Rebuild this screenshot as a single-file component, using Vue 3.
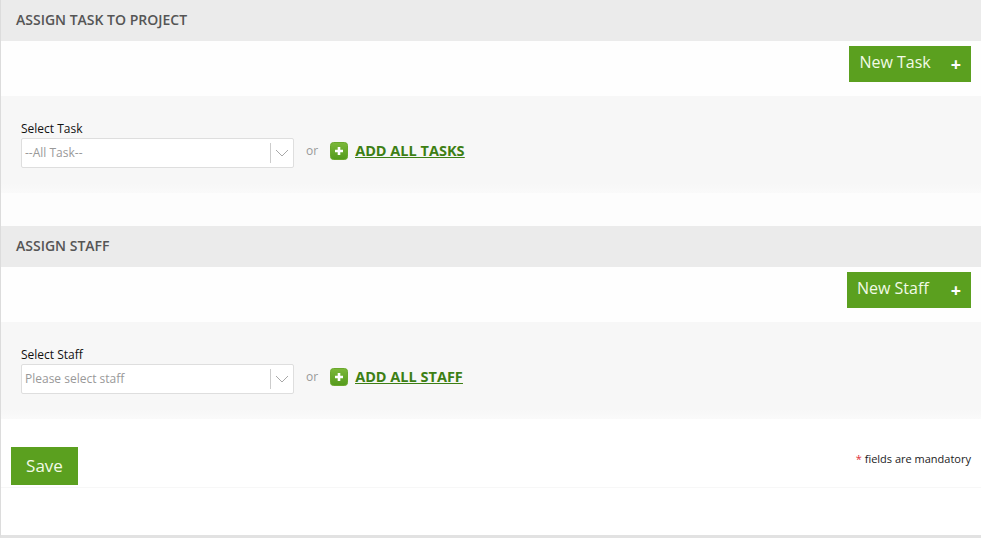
<script setup>
const sections = [
    {
        title: "ASSIGN TASK TO PROJECT",
        button: "New Task",
        label: "Select Task",
        placeholder: "--All Task--",
        addAll: "ADD ALL TASKS",
    },
    {
        title: "ASSIGN STAFF",
        button: "New Staff",
        label: "Select Staff",
        placeholder: "Please select staff",
        addAll: "ADD ALL STAFF",
    },
];
</script>
<template>
    <div class="page">
        <section v-for="item in sections" :key="item.title" class="section">
            <h2 class="heading">{{ item.title }}</h2>
            <div class="actions">
                <button class="new-btn">
                    <span>{{ item.button }}</span>
                    <span class="plus">+</span>
                </button>
            </div>
            <div class="panel">
                <div class="field">
                    <label class="label">{{ item.label }}</label>
                    <div class="select">
                        <span class="placeholder">{{ item.placeholder }}</span>
                        <span class="arrow">
                            <svg width="14" height="8" viewBox="0 0 14 8">
                                <path d="M1 1l6 6 6-6" fill="none" stroke="#a8a8a8" stroke-width="1" />
                            </svg>
                        </span>
                    </div>
                </div>
                <span class="or">or</span>
                <a class="add-all" href="#">
                    <svg class="add-icon" width="18" height="18" viewBox="0 0 18 18">
                        <defs>
                            <linearGradient id="addGreen" x1="0" y1="0" x2="0" y2="1">
                                <stop offset="0" stop-color="#7cb83a" />
                                <stop offset="1" stop-color="#549a1c" />
                            </linearGradient>
                        </defs>
                        <rect x="0.5" y="0.5" width="17" height="17" rx="3" fill="url(#addGreen)" stroke="#6aa82c" />
                        <path d="M9 5v8M5 9h8" stroke="#fff" stroke-width="2.6" />
                    </svg>
                    <span class="add-text">{{ item.addAll }}</span>
                </a>
            </div>
        </section>
        <div class="footer">
            <button class="save">Save</button>
            <p class="note"><span class="star">*</span> fields are mandatory</p>
        </div>
    </div>
</template>
<style scoped>
.page {
    height: 535px;
    border-left: 1px solid #dcdcdc;
    border-bottom: 3px solid #e2e2e2;
    background: #fff;
    font-family: "Open Sans", sans-serif;
    overflow: hidden;
}

.section {
    background: #fdfdfd;
    padding-bottom: 33px;
}

.section:nth-child(2) {
    padding-bottom: 0;
}

.heading {
    margin: 0;
    height: 41px;
    padding-left: 15px;
    background: #ebebeb;
    color: #555;
    font-size: 14px;
    font-weight: 600;
    line-height: 39px;
}

.actions {
    display: flex;
    justify-content: flex-end;
    height: 55px;
    padding: 5px 10px 0 0;
    box-sizing: border-box;
    background: #fefefe;
}

.new-btn {
    display: flex;
    align-items: center;
    justify-content: space-between;
    height: 36px;
    padding: 0 10px;
    gap: 20px;
    border: none;
    background: #5ba01f;
    color: #f2fae6;
    font-family: inherit;
    font-size: 16px;
}

.section:nth-child(2) .new-btn {
    gap: 22px;
}

.new-btn span:first-child {
    margin-top: -4px;
}

.plus {
    margin-top: -1px;
    color: #fff;
    font-size: 18px;
    font-weight: 700;
    line-height: 1;
}

.panel {
    display: flex;
    align-items: flex-start;
    height: 97px;
    padding: 24px 0 0 20px;
    box-sizing: border-box;
    background: linear-gradient(#f7f7f7 90%, #fafafa);
}

.field {
    display: flex;
    flex-direction: column;
    width: 273px;
}

.label {
    color: #111;
    font-size: 12px;
    line-height: 18px;
}

.select {
    display: flex;
    align-items: center;
    justify-content: space-between;
    height: 30px;
    box-sizing: border-box;
    border: 1px solid #dedede;
    border-radius: 2px;
    background: #fff;
}

.placeholder {
    padding: 0 0 2px 3px;
    color: #999;
    font-size: 12px;
}

.arrow {
    display: flex;
    align-items: center;
    justify-content: center;
    width: 22px;
    height: 20px;
    border-left: 1px solid #ccc;
}

.or {
    margin: 22px 0 0 12px;
    color: #999;
    font-size: 12px;
    line-height: 17px;
}

.add-all {
    display: flex;
    align-items: center;
    gap: 7px;
    margin: 21px 0 0 12px;
    color: #3d7f14;
    font-size: 14.5px;
    font-weight: 700;
}

.add-text {
    text-decoration: underline;
}

.footer {
    display: flex;
    align-items: flex-start;
    justify-content: space-between;
    height: 69px;
    box-sizing: border-box;
    padding: 28px 10px 0 10px;
    border-bottom: 1px solid #f7f7f7;
}

.save {
    width: 67px;
    height: 38px;
    padding: 0 0 2px;
    border: none;
    background: #5ba01f;
    color: #f2fae6;
    font-family: inherit;
    font-size: 17px;
}

.note {
    margin: 4px 0 0;
    color: #222;
    font-size: 11px;
}

.star {
    color: #e0303a;
}
</style>
